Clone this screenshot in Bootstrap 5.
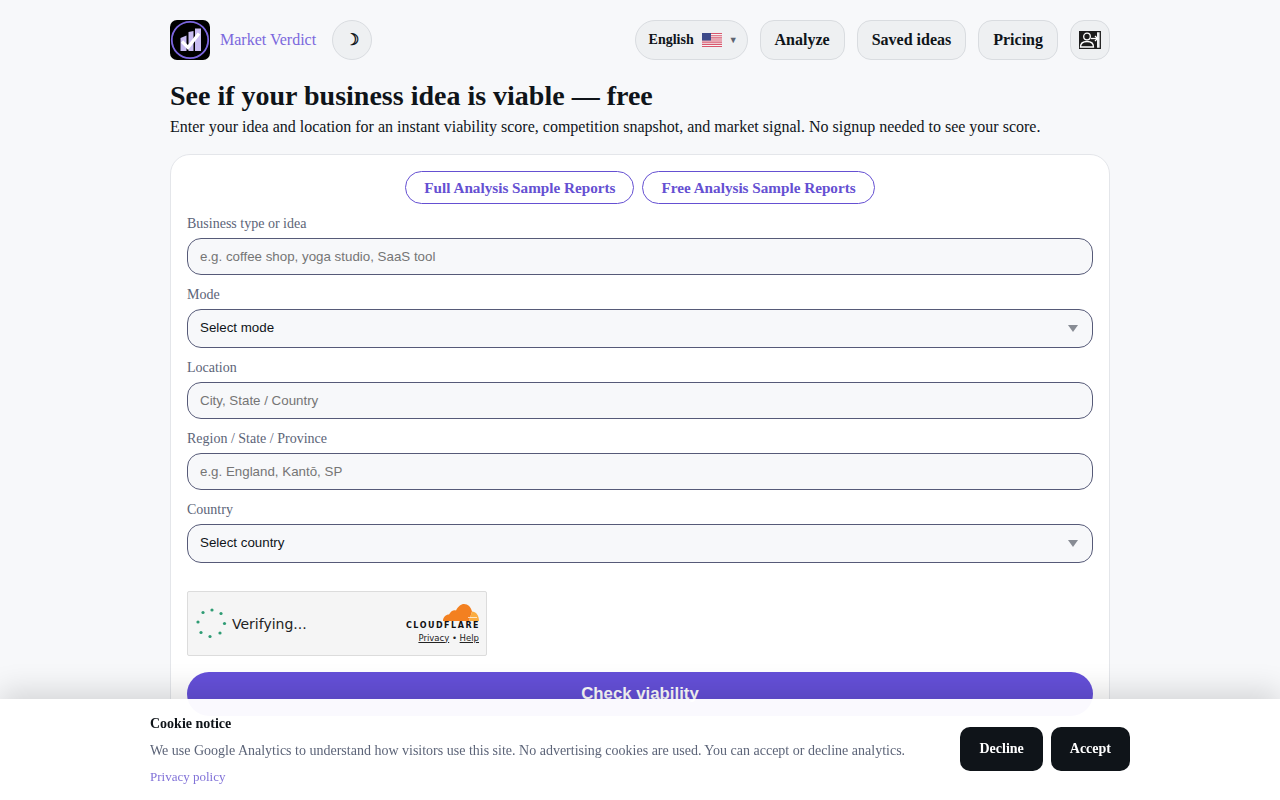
<!DOCTYPE html>
<html lang="en">
<head>
    <meta charset="UTF-8">
    <meta name="viewport" content="width=device-width, initial-scale=1.0">
    <title>Market Verdict</title>
    <link href="https://cdn.jsdelivr.net/npm/bootstrap@5.3.0/dist/css/bootstrap.min.css" rel="stylesheet">
    <style>
        html, body {
            height: 800px;
            overflow: hidden;
        }
        body {
            background-color: #f7f8fa;
            font-family: "Liberation Serif", serif;
            color: #0f1419;
        }
        .page-wrap {
            width: 940px;
            margin: 0 auto;
            padding-top: 20px;
        }
        .brand-logo {
            width: 40px;
            height: 40px;
            display: block;
        }
        .brand-name {
            color: #7b68dd;
            font-size: 16px;
            margin-left: 10px;
            text-decoration: none;
        }
        .nav-chip {
            height: 40px;
            background: #eef0f2;
            border: 1px solid #d9dce0;
            border-radius: 14px;
            color: #0f1419;
            font-size: 16px;
            font-weight: 700;
            padding: 0 14px;
            display: flex;
            align-items: center;
            text-decoration: none;
        }
        .nav-round {
            width: 40px;
            height: 40px;
            margin-left: 16px;
            padding: 0;
            justify-content: center;
            border-radius: 50%;
            font-size: 16px;
        }
        .nav-lang {
            border-radius: 20px;
            font-size: 14px;
            line-height: 18px;
            padding: 0 0 0 13px;
            width: 113px;
        }
        .nav-user {
            width: 40px;
            padding: 0;
            justify-content: center;
        }
        .lang-flag {
            flex-shrink: 0;
            margin-left: 8px;
        }
        .lang-caret {
            font-size: 9px;
            color: #5c6470;
            margin-left: 7px;
        }
        .page-title {
            font-size: 28px;
            font-weight: 700;
            line-height: 34px;
            margin: 19px 0 0;
        }
        .page-sub {
            font-size: 16px;
            line-height: 24px;
            margin: 2px 0 15px;
        }
        .form-panel {
            background: #fff;
            border: 1px solid #e4e6ea;
            border-radius: 20px;
            padding: 16px;
        }
        .sample-pill {
            height: 33px;
            border: 1px solid #6550d2;
            border-radius: 17px;
            color: #6550d2;
            font-size: 15.2px;
            font-weight: 700;
            padding: 2px 18px 0;
            display: flex;
            align-items: center;
            text-decoration: none;
            background: #fff;
        }
        .field-label {
            display: block;
            color: #5c6478;
            font-size: 14px;
            line-height: 20px;
            margin: 10px 0 4px;
        }
        .field-input.form-control,
        .field-input.form-select {
            background-color: #f7f8fa;
            border: 1px solid #565a78;
            border-radius: 14px;
            font-family: "Liberation Sans", sans-serif;
            font-size: 13.33px;
            color: #0f1419;
            padding: 0 12px;
            height: 37px;
        }
        .field-input.form-select {
            height: 39px;
            padding-bottom: 2px;
            background-image: url("data:image/svg+xml,%3Csvg xmlns='http://www.w3.org/2000/svg' width='10' height='7'%3E%3Cpath d='M0 0h10L5 7z' fill='%23888c94'/%3E%3C/svg%3E");
            background-size: 10px 7px;
            background-position: right 14px center;
        }
        .field-input::placeholder {
            color: #757575;
            opacity: 1;
        }
        .turnstile-box {
            width: 300px;
            height: 65px;
            margin-top: 28px;
            background: #f5f5f5;
            border: 1px solid #dcdcdc;
            border-radius: 2px;
            padding: 0 7px 0 8px;
            font-family: "DejaVu Sans", sans-serif;
        }
        .turnstile-text {
            font-size: 14px;
            color: #232323;
            margin-left: 5px;
            padding-top: 1px;
        }
        .cf-cloud {
            display: block;
            margin: 0 0 0 auto;
        }
        .cf-word {
            font-family: "DejaVu Sans", sans-serif;
            font-size: 8px;
            font-weight: 700;
            letter-spacing: 1.5px;
            margin-right: -1px;
            line-height: 10px;
            color: #111;
            white-space: nowrap;
        }
        .cf-links {
            font-size: 8.5px;
            line-height: 12px;
            margin-top: 1px;
            color: #232323;
        }
        .cf-links a {
            color: #232323;
        }
        .submit-btn {
            display: block;
            width: 100%;
            height: 44px;
            margin-top: 16px;
            border: 0;
            border-radius: 22px;
            background: #6550d9;
            color: #fff;
            font-family: "Liberation Sans", sans-serif;
            font-size: 16.8px;
            font-weight: 700;
        }
        .cookie-bar {
            position: fixed;
            left: 0;
            right: 0;
            bottom: 0;
            height: 101px;
            background: rgba(255, 255, 255, .97);
            box-shadow: 0 -8px 28px rgba(0, 0, 0, .14);
            padding: 0 150px;
        }
        .cookie-title {
            font-size: 14px;
            font-weight: 700;
            line-height: 18px;
            margin-top: 16px;
        }
        .cookie-text {
            font-size: 14px;
            line-height: 20px;
            color: #5c6478;
            margin-top: 8px;
        }
        .cookie-link {
            display: block;
            font-size: 13px;
            line-height: 18px;
            color: #8172d8;
            text-decoration: none;
            margin-top: 7px;
        }
        .cookie-actions {
            margin-top: -1px;
        }
        .cookie-btn {
            height: 44px;
            background: #0f1419;
            border: 0;
            border-radius: 10px;
            color: #fff;
            font-family: "Liberation Serif", serif;
            font-size: 14px;
            font-weight: 700;
            padding: 0 19px 2px;
        }
    </style>
</head>
<body>

<div class="page-wrap">
    <header class="d-flex justify-content-between align-items-center">
        <div class="d-flex align-items-center">
            <svg class="brand-logo" viewBox="0 0 40 40">
                <rect width="40" height="40" rx="7" fill="#000"/>
                <circle cx="20" cy="20" r="18.200" fill="none" stroke="#7c66e0" stroke-width="1.800"/>
                <path d="M10.500 31V18l6-2.500V31zM18.500 31V12l5-1v20zM25 31V8.500h6V31z" fill="#c9bdf2"/>
                <path d="M12 21.500l6 6 11-14" fill="none" stroke="#fff" stroke-width="3.200"/>
            </svg>
            <a href="#" class="brand-name">Market Verdict</a>
            <a href="#" class="nav-chip nav-round">☽</a>
        </div>
        <nav class="d-flex align-items-center gap-2">
            <div class="nav-chip nav-lang">
                English
                <svg class="lang-flag" width="20" height="14" viewBox="0 0 20 14">
                    <rect width="20" height="14" fill="#f4f4f4"/>
                    <path d="M0 0h20v1.100H0zM0 2.200h20v1.100H0zM0 4.300h20v1.100H0zM0 6.500h20v1.100H0zM0 8.600h20v1.100H0zM0 10.800h20v1.100H0zM0 12.900h20V14H0z" fill="#d9566e"/>
                    <rect width="9" height="7.500" fill="#3d4a8a"/>
                </svg>
                <span class="lang-caret">▼</span>
            </div>
            <a href="#" class="nav-chip ms-1">Analyze</a>
            <a href="#" class="nav-chip ms-1">Saved ideas</a>
            <a href="#" class="nav-chip ms-1">Pricing</a>
            <a href="#" class="nav-chip nav-user ms-1">
                <svg width="22" height="18" viewBox="0 0 22 18">
                    <rect width="18" height="18" fill="#1c1c1c"/>
                    <path d="M17 .7h4.300v16.600H17" fill="none" stroke="#1c1c1c" stroke-width="1.300"/>
                    <circle cx="8" cy="5.500" r="3.300" fill="none" stroke="#fff" stroke-width="1.300"/>
                    <path d="M1.500 16c0-4 2.500-5.500 6.500-5.500s6.500 1.500 6.500 5.500z" fill="none" stroke="#fff" stroke-width="1.300"/>
                    <path d="M12 7.500h6" fill="none" stroke="#fff" stroke-width="1.300"/>
                    <path d="M16 5l2.500 2.500L16 10" fill="none" stroke="#fff" stroke-width="1.300"/>
                </svg>
            </a>
        </nav>
    </header>

    <h1 class="page-title">See if your business idea is viable — free</h1>
    <p class="page-sub">Enter your idea and location for an instant viability score, competition snapshot, and market signal. No signup needed to see your score.</p>

    <form class="form-panel">
        <div class="d-flex justify-content-center gap-2">
            <a href="#" class="sample-pill">Full Analysis Sample Reports</a>
            <a href="#" class="sample-pill">Free Analysis Sample Reports</a>
        </div>
        <label class="field-label" for="idea">Business type or idea</label>
        <input id="idea" class="form-control field-input" placeholder="e.g. coffee shop, yoga studio, SaaS tool">
        <label class="field-label" for="mode">Mode</label>
        <select id="mode" class="form-select field-input"><option>Select mode</option></select>
        <label class="field-label" for="loc">Location</label>
        <input id="loc" class="form-control field-input" placeholder="City, State / Country">
        <label class="field-label" for="region">Region / State / Province</label>
        <input id="region" class="form-control field-input" placeholder="e.g. England, Kantō, SP">
        <label class="field-label" for="country">Country</label>
        <select id="country" class="form-select field-input"><option>Select country</option></select>

        <div class="turnstile-box d-flex align-items-center justify-content-between">
            <div class="d-flex align-items-center">
                <svg width="31" height="33" viewBox="0 0 31 33" fill="#2f9c74">
                    <circle cx="16" cy="3" r="1.600"/>
                    <circle cx="25" cy="6.500" r="1.600"/>
                    <circle cx="28.500" cy="16.500" r="1.600"/>
                    <circle cx="24" cy="26" r="1.600"/>
                    <circle cx="14" cy="29.500" r="1.600"/>
                    <circle cx="5" cy="25.500" r="1.600"/>
                    <circle cx="2" cy="15" r="1.600"/>
                    <circle cx="7" cy="5.500" r="1.600"/>
                </svg>
                <span class="turnstile-text">Verifying...</span>
            </div>
            <div class="text-end">
                <svg class="cf-cloud" width="36" height="17" viewBox="0 0 36 17">
                    <path d="M0 17c0-4 3-6.500 6-6.500 2-4 5-5 7-4C15 2.500 18 0 21 0c4 0 7 3 8 7.500l-3 9.500z" fill="#f38020"/>
                    <path d="M26 17l3-9.500c4 0 7 4 7 9.500z" fill="#fbad41"/>
                    <path d="M25 13.500h9" stroke="#fff" stroke-width=".7"/>
                </svg>
                <div class="cf-word">CLOUDFLARE</div>
                <div class="cf-links"><a href="#">Privacy</a> • <a href="#">Help</a></div>
            </div>
        </div>

        <button type="button" class="submit-btn">Check viability</button>
    </form>
</div>

<div class="cookie-bar d-flex justify-content-between align-items-start">
    <div>
        <div class="cookie-title">Cookie notice</div>
        <div class="cookie-text">We use Google Analytics to understand how visitors use this site. No advertising cookies are used. You can accept or decline analytics.</div>
        <a href="#" class="cookie-link">Privacy policy</a>
    </div>
    <div class="cookie-actions d-flex gap-2 align-self-center">
        <button class="cookie-btn">Decline</button>
        <button class="cookie-btn">Accept</button>
    </div>
</div>

<script src="https://cdn.jsdelivr.net/npm/bootstrap@5.3.0/dist/js/bootstrap.bundle.min.js"></script>
</body>
</html>
